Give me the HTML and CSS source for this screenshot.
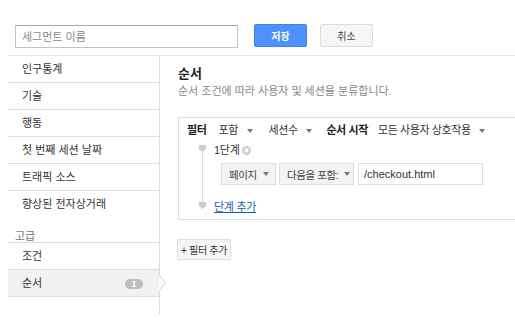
FILE: index.html
```html
<!DOCTYPE html>
<html lang="ko">
<head>
  <meta charset="UTF-8" />
  <meta name="viewport" content="width=device-width, initial-scale=1.0" />
  <title>세그먼트 편집</title>
  <link rel="stylesheet" href="styles.css">
</head>
<body>
  <div class="topbar">
    <input type="text" class="nombre" placeholder="세그먼트 이름" />
    <button class="btn-guardar">저장</button>
    <button class="btn-cancelar">취소</button>
  </div>

  <div class="layout">
    <div class="sidebar">
      <div class="item">인구통계</div>
      <div class="item">기술</div>
      <div class="item">행동</div>
      <div class="item">첫 번째 세션 날짜</div>
      <div class="item">트래픽 소스</div>
      <div class="item sin-borde">향상된 전자상거래</div>
      <div class="grupo">고급</div>
      <div class="item">조건</div>
      <div class="item activo">순서 <span class="badge">1</span></div>
    </div>

    <div class="main">
      <h2>순서</h2>
      <p class="sub">순서 조건에 따라 사용자 및 세션을 분류합니다.</p>

      <div class="filtro">
        <div class="fila-filtro">
          <b class="f1">필터</b>
          <span class="f2">포함 <i class="caret"></i></span>
          <span class="f3">세션수 <i class="caret"></i></span>
          <b class="f4">순서 시작</b>
          <span>모든 사용자 상호작용 <i class="caret"></i></span>
        </div>

        <div class="pasos">
          <div class="riel">
            <span class="pin"></span>
            <span class="linea"></span>
            <span class="pin"></span>
          </div>
          <div class="contenido">
            <div class="paso">1단계
              <svg class="quitar" width="9" height="9" viewBox="0 0 9 9">
                <circle cx="4.5" cy="4.5" r="4.5" fill="#cfcfcf"/>
                <path d="M2.8 2.8l3.4 3.4M6.2 2.8l-3.4 3.4" stroke="#fff" stroke-width="1.3"/>
              </svg>
            </div>
            <div class="controles">
              <div class="select s-pagina">페이지 <i class="caret"></i></div>
              <div class="select s-cond">다음을 포함: <i class="caret"></i></div>
              <input type="text" class="valor" value="/checkout.html" />
            </div>
            <a href="#" class="agregar">단계 추가</a>
          </div>
        </div>
      </div>

      <button class="btn-filtro">+ 필터 추가</button>
    </div>
  </div>
</body>
</html>
```

FILE: styles.css
```css
body {
  margin: 0;
  font-family: "Liberation Sans", "Noto Sans CJK KR", sans-serif;
  font-size: 11px;
  color: #333;
  background: #fff;
}
.topbar {
  display: flex;
  align-items: flex-start;
  height: 55px;
  padding: 24px 0 0 15px;
  box-sizing: border-box;
}
.nombre {
  width: 223px;
  height: 23px;
  border: 1px solid #c4c4c4;
  border-top-color: #a9a9a9;
  padding: 0 6px;
  box-sizing: border-box;
  font-family: inherit;
  font-size: 11px;
  margin: 1px 16px 0 0;
}
.nombre::placeholder {
  color: #888;
}
.btn-guardar, .btn-cancelar {
  width: 53px;
  height: 23px;
  border-radius: 2px;
  font-family: inherit;
  font-size: 10px;
  padding: 0;
}
.btn-guardar {
  background: #4d90fe;
  border: 1px solid #3d82f0;
  color: white;
  font-weight: bold;
  margin-right: 13px;
}
.btn-cancelar {
  background: #f5f5f5;
  border: 1px solid #dcdcdc;
  color: #444;
}
.layout {
  display: flex;
  margin-left: 8px;
  border-top: 1px solid #e5e5e5;
}
.sidebar {
  width: 151px;
  flex: none;
  border-right: 1px solid #ddd;
  padding-bottom: 17px;
}
.item {
  height: 26px;
  line-height: 26px;
  padding-left: 14px;
  border-bottom: 1px solid #ddd;
  position: relative;
}
.sin-borde {
  border-bottom: none;
}
.grupo {
  height: 26px;
  padding: 13px 0 0 7px;
  box-sizing: border-box;
  line-height: 12px;
  color: #777;
  border-bottom: 1px solid #ddd;
}
.activo {
  background: #f1f1f1;
}
.activo::before, .activo::after {
  content: "";
  position: absolute;
  top: 6px;
  border-style: solid;
  border-color: transparent;
  border-width: 7px 0 7px 6px;
}
.activo::before {
  right: -7px;
  border-left-color: #ccc;
}
.activo::after {
  right: -6px;
  border-left-color: #fff;
}
.badge {
  position: absolute;
  right: 16px;
  top: 9px;
  width: 18px;
  height: 10px;
  line-height: 10px;
  border-radius: 5px;
  background: #bdbdbd;
  color: white;
  font-size: 9px;
  font-weight: bold;
  text-align: center;
}
.main {
  flex: 1;
  overflow: hidden;
  padding: 9px 0 0 18px;
}
h2 {
  margin: 0;
  font-size: 13px;
  line-height: 18px;
  color: #222;
}
.sub {
  margin: 0;
  line-height: 16px;
  color: #888;
}
.filtro {
  margin-top: 18px;
  width: 380px;
  border: 1px solid #ddd;
  padding-bottom: 4px;
}
.fila-filtro {
  display: flex;
  align-items: center;
  height: 22px;
  padding-left: 8px;
  letter-spacing: -0.4px;
  white-space: nowrap;
}
.fila-filtro b {
  color: #222;
}
.f1 { margin-right: 12px; }
.f2 { margin-right: 16px; }
.f3 { margin-right: 14px; }
.f4 { margin-right: 10px; }
.caret {
  display: inline-block;
  vertical-align: middle;
  margin-left: 6px;
  border-top: 4px solid #777;
  border-left: 3px solid transparent;
  border-right: 3px solid transparent;
}
.pasos {
  display: flex;
  padding-left: 20px;
  margin-top: 2px;
}
.riel {
  width: 7px;
  display: flex;
  flex-direction: column;
  align-items: center;
  padding: 3px 0 6px;
}
.pin {
  width: 7px;
  height: 7px;
  background: #cbcbcb;
  clip-path: polygon(0 0, 100% 0, 100% 60%, 50% 100%, 0 60%);
}
.linea {
  flex: 1;
  width: 1px;
  background: #ddd;
}
.contenido {
  margin-left: 8px;
}
.paso {
  line-height: 16px;
  display: flex;
  align-items: center;
  gap: 3px;
  letter-spacing: -0.3px;
}
.controles {
  display: flex;
  margin: 5px 0 14px 7px;
}
.select {
  height: 22px;
  box-sizing: border-box;
  display: flex;
  align-items: center;
  background: #f3f3f3;
  border: 1px solid #ddd;
  margin-right: 3px;
  padding-left: 7px;
  white-space: nowrap;
  overflow: hidden;
  font-size: 10.5px;
  letter-spacing: -0.4px;
  color: #444;
}
.s-pagina { width: 55px; }
.s-cond { width: 75px; margin-right: 4px; }
.select .caret { margin-left: 6px; }
.valor {
  width: 125px;
  height: 22px;
  box-sizing: border-box;
  border: 1px solid #ddd;
  padding: 0 5px;
  font-family: inherit;
  font-size: 11px;
  color: #333;
}
.agregar {
  display: block;
  line-height: 16px;
  color: #1a5fb4;
  letter-spacing: -0.3px;
}
.btn-filtro {
  margin-top: 19px;
  margin-left: -1px;
  height: 21px;
  padding: 0 3px;
  background: #f5f5f5;
  border: 1px solid #ddd;
  border-radius: 2px;
  font-family: inherit;
  font-size: 10px;
  letter-spacing: -0.3px;
  color: #333;
}
```
